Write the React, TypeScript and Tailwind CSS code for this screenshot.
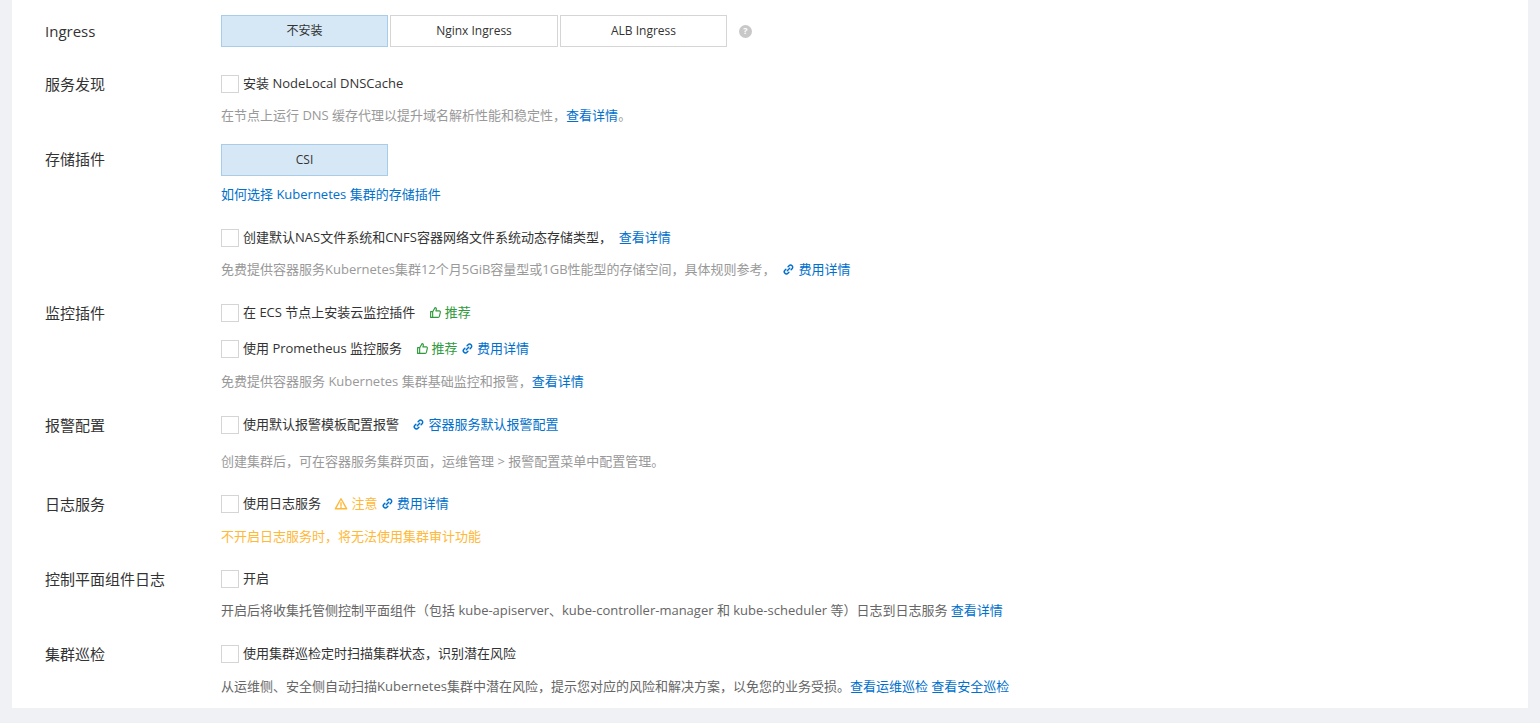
const LinkIcon = () => (
  <svg viewBox="0 0 16 16" className="inline-block w-[13px] h-[13px] mr-[3px] -mt-[2px] align-middle" fill="none" stroke="currentColor" strokeWidth="1.8" strokeLinecap="round">
    <path d="M6.5 9.5l3-3" />
    <path d="M7.5 4.5l1.2-1.2a2.6 2.6 0 013.7 3.7L11.2 8.2" />
    <path d="M8.5 11.5l-1.2 1.2a2.6 2.6 0 01-3.7-3.7L4.8 7.8" />
  </svg>
);

const ThumbIcon = () => (
  <svg viewBox="0 0 16 16" className="inline-block w-[13px] h-[13px] mr-[3px] -mt-[2px] align-middle" fill="none" stroke="currentColor" strokeWidth="1.4" strokeLinejoin="round">
    <path d="M2 7h2.5v7H2z" />
    <path d="M4.5 7l3-5c1.2 0 1.8.8 1.5 2L8.5 6h4.2c.9 0 1.5.8 1.3 1.6l-1.2 5.2c-.2.7-.8 1.2-1.5 1.2H4.5" />
  </svg>
);

const WarnIcon = () => (
  <svg viewBox="0 0 16 16" className="inline-block w-[14px] h-[14px] mr-[3px] -mt-[2px] align-middle" fill="none" stroke="currentColor" strokeWidth="1.6" strokeLinejoin="round">
    <path d="M8 2L14.5 13.5h-13z" />
    <path d="M8 6.5v3.5M8 11.5v.8" strokeLinecap="round" />
  </svg>
);

const Check = ({ children }: { children: React.ReactNode }) => (
  <div className="flex items-center h-[20px] text-[13px] text-[#333]">
    <span className="w-[18px] h-[18px] border border-[#d5d5d5] bg-white mr-[4px] shrink-0" />
    <span>{children}</span>
  </div>
);

const Desc = ({ children, className = "" }: { children: React.ReactNode; className?: string }) => (
  <div className={"h-[20px] leading-[20px] text-[13px] text-[#999] whitespace-nowrap " + className}>{children}</div>
);

const A = ({ children }: { children: React.ReactNode }) => <span className="text-[#0070cc]">{children}</span>;

const Row = ({ label, mt, labelMt = "mt-0", children }: { label: string; mt: string; labelMt?: string; children: React.ReactNode }) => (
  <div className={"flex " + mt}>
    <div className={"w-[209px] pl-[33px] text-[15px] text-[#333] leading-[20px] shrink-0 " + labelMt}>{label}</div>
    <div className="flex flex-col">{children}</div>
  </div>
);

export default function App() {
  return (
    <div className="w-[1540px] h-[723px] bg-[#f0f1f4] px-[12px] overflow-hidden" style={{ fontFamily: '"Open Sans","Noto Sans CJK SC",sans-serif' }}>
      <div className="bg-white h-[708px] pt-[15px] pb-[12px]">
        <Row label="Ingress" mt="mt-0" labelMt="mt-[6px]">
          <div className="flex items-center gap-[2px] text-[12px] text-[#333]">
            <div className="w-[167px] h-[32px] flex items-center justify-center bg-[#d6e8f5] border border-[#a9cde8]">不安装</div>
            <div className="w-[168px] h-[32px] flex items-center justify-center border border-[#d5d5d5]">Nginx Ingress</div>
            <div className="w-[167px] h-[32px] flex items-center justify-center border border-[#d5d5d5]">ALB Ingress</div>
            <span className="ml-[10px] w-[13px] h-[13px] rounded-full bg-[#c8c8c8] text-white text-[9px] font-bold flex items-center justify-center">?</span>
          </div>
        </Row>
        <Row label="服务发现" mt="mt-[27px]">
          <Check>安装 NodeLocal DNSCache</Check>
          <Desc className="mt-[11px]">在节点上运行 DNS 缓存代理以提升域名解析性能和稳定性，<A>查看详情</A>。</Desc>
        </Row>
        <Row label="存储插件" mt="mt-[19px]" labelMt="mt-[5px]">
          <div className="w-[167px] h-[32px] flex items-center justify-center bg-[#d6e8f5] border border-[#a9cde8] text-[12px] text-[#333]">CSI</div>
          <div className="mt-[8px] h-[20px] leading-[20px] text-[13px] text-[#0070cc]">如何选择 Kubernetes 集群的存储插件</div>
          <div className="mt-[24px]"><Check>创建默认NAS文件系统和CNFS容器网络文件系统动态存储类型， <A>&nbsp;查看详情</A></Check></div>
          <Desc className="mt-[11px]">免费提供容器服务Kubernetes集群12个月5GiB容量型或1GB性能型的存储空间，具体规则参考， <A>&nbsp;<LinkIcon />费用详情</A></Desc>
        </Row>
        <Row label="监控插件" mt="mt-[24px]">
          <Check>在 ECS 节点上安装云监控插件 <span className="ml-[10px] text-[#2f9b3c]"><ThumbIcon />推荐</span></Check>
          <div className="mt-[16px]"><Check>使用 Prometheus 监控服务 <span className="ml-[10px] text-[#2f9b3c]"><ThumbIcon />推荐</span> <A><LinkIcon />费用详情</A></Check></div>
          <Desc className="mt-[12px]">免费提供容器服务 Kubernetes 集群基础监控和报警，<A>查看详情</A></Desc>
        </Row>
        <Row label="报警配置" mt="mt-[24px]">
          <Check>使用默认报警模板配置报警 <span className="ml-[10px]"><A><LinkIcon />容器服务默认报警配置</A></span></Check>
          <Desc className="mt-[16px] text-[#666]">创建集群后，可在容器服务集群页面，运维管理 &gt; 报警配置菜单中配置管理。</Desc>
        </Row>
        <Row label="日志服务" mt="mt-[23px]">
          <Check>使用日志服务 <span className="ml-[10px] text-[#ffb837]"><WarnIcon />注意</span> <A><LinkIcon />费用详情</A></Check>
          <Desc className="mt-[12px] !text-[#ffb837]">不开启日志服务时，将无法使用集群审计功能</Desc>
        </Row>
        <Row label="控制平面组件日志" mt="mt-[23px]">
          <Check>开启</Check>
          <Desc className="mt-[11px] !text-[#666]">开启后将收集托管侧控制平面组件（包括 kube-apiserver、kube-controller-manager 和 kube-scheduler 等）日志到日志服务 <A>查看详情</A></Desc>
        </Row>
        <Row label="集群巡检" mt="mt-[24px]">
          <Check>使用集群巡检定时扫描集群状态，识别潜在风险</Check>
          <Desc className="mt-[12px] !text-[#666]">从运维侧、安全侧自动扫描Kubernetes集群中潜在风险，提示您对应的风险和解决方案，以免您的业务受损。<A>查看运维巡检 查看安全巡检</A></Desc>
        </Row>
      </div>
    </div>
  );
}
